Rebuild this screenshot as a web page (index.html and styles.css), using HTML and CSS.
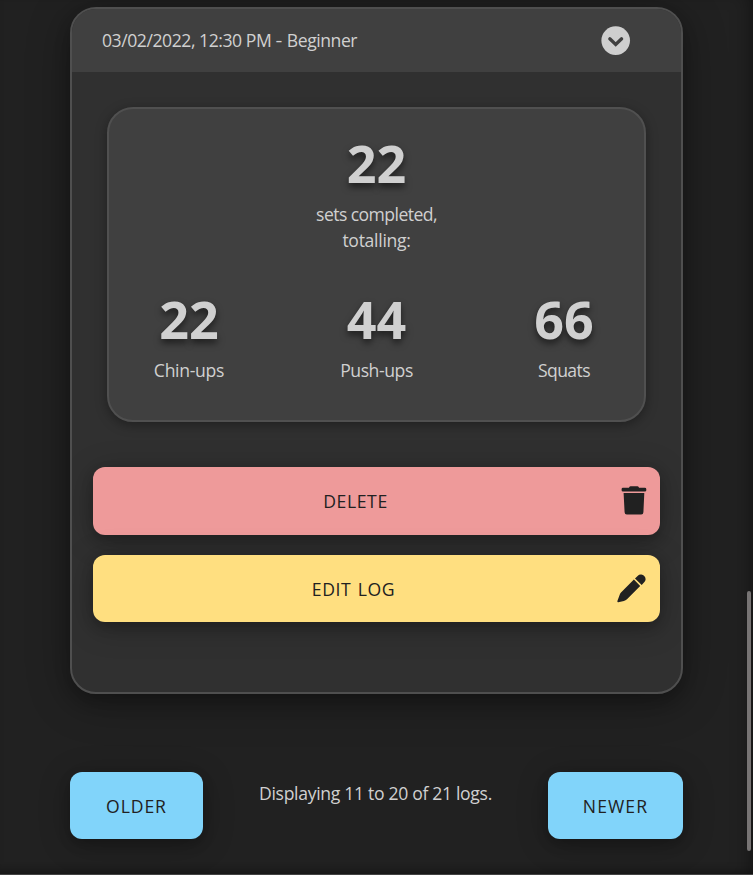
FILE: index.html
```html
<!DOCTYPE html>
<html lang="en">
<head>
<meta charset="utf-8">
<title>Workout logs</title>
<link rel="stylesheet" href="styles.css">
</head>
<body>
<main class="page">
  <section class="log">
    <header class="log-header">
      <span class="log-title">03/02/2022, 12:30 PM <span class="dash">-</span> Beginner</span>
      <svg class="chevron" viewBox="0 0 30 30"><circle cx="14.7" cy="14.6" r="14.3" fill="#cfcfcf"/><path d="M8.8 12.8L14.7 18.5L20.6 12.8" fill="none" stroke="#404040" stroke-width="3.3" stroke-linecap="round" stroke-linejoin="miter"/></svg>
    </header>
    <div class="log-body">
      <div class="stats">
        <div class="stat total"><strong>22</strong><span class="sets">sets completed,</span><span class="totalling">totalling:</span></div>
        <div class="stat-row">
          <div class="stat"><strong>22</strong><span class="chin">Chin-ups</span></div>
          <div class="stat"><strong>44</strong><span class="push">Push-ups</span></div>
          <div class="stat"><strong>66</strong><span class="squat">Squats</span></div>
        </div>
      </div>
      <div class="actions">
        <button class="btn delete"><span>DELETE</span>
          <svg class="icon" viewBox="0 0 30 30"><path d="M11.2 2.2Q11.6 1.3 12.6 1.3H19.4Q20.4 1.3 20.8 2.2L21 2.8H26.8Q28.3 2.8 28.3 4.2V5.2Q28.3 6.6 26.8 6.6H5Q3.6 6.6 3.6 5.2V4.2Q3.6 2.8 5 2.8H11Z M5.6 8H26.3L25.4 27.3Q25.3 29.5 23.2 29.5H8.8Q6.7 29.5 6.6 27.3Z" fill="#212121"/></svg>
        </button>
        <button class="btn edit"><span>EDIT LOG</span>
          <svg class="icon" viewBox="0 0 30 30"><path d="M16.9 6.6L23.2 12.9L10 26.2Q8.6 27.4 6.9 27.9L1.3 29.3Q.1 29.4 .4 28.1L2.7 21.7Q3.1 20.5 4 19.6Z M18 5.5L20.6 2.9Q22.2 1.3 24.3 1.5Q26.1 1.6 27.3 3.1Q28.8 4.7 28.6 6.6Q28.5 8 27.4 9.1L24.7 11.9Z" fill="#212121"/></svg>
        </button>
      </div>
    </div>
  </section>
  <nav class="pager">
    <button class="btn older"><span>OLDER</span></button>
    <span class="status">Displaying 11 to 20 of 21 logs.</span>
    <button class="btn newer"><span>NEWER</span></button>
  </nav>
</main>
<div class="scroll-thumb"></div>
</body>
</html>
```
FILE: styles.css
```css
* { box-sizing: border-box; }
body {
  margin: 0;
  background: #212121;
  color: #d0d0d0;
  font: 17.6px/26px "Open Sans", "Noto Sans", sans-serif;
}
.page {
  height: 875px;
  padding: 7px 70px 0;
  overflow: hidden;
  border-bottom: 1px solid #424242;
  box-shadow: inset -14px 0 20px -12px rgba(0,0,0,.4), inset 0 -8px 8px -6px rgba(0,0,0,.35);
}
.log {
  height: 687px;
  border: 2px solid #4f4f4f;
  border-radius: 26px;
  overflow: hidden;
  background: #303030;
  box-shadow: 0 7px 44px rgba(0,0,0,.32), 0 8px 16px rgba(0,0,0,.2);
}
.log-header {
  height: 63px;
  padding: 0 50px 0 30px;
  display: flex;
  align-items: center;
  justify-content: space-between;
  background: #404040;
}
.log-title { letter-spacing: -.45px; margin-bottom: 2px; }
.dash { display: inline-block; transform: scaleX(1.2); margin: 0 1px; }
.chevron { width: 30px; height: 30px; }
.log-body { padding: 35px 21px 0; }
.stats {
  height: 315px;
  margin: 0 14px;
  padding: 25px 0 0;
  border: 2px solid #505050;
  border-radius: 26px;
  background: #404040;
  box-shadow: 0 3px 12px rgba(0,0,0,.35);
}
.stat { display: flex; flex-direction: column; align-items: center; }
.stat strong {
  font-size: 52px;
  line-height: 58px;
  margin-bottom: 9px;
  text-shadow: 0 4px 7px rgba(0,0,0,.55);
}
.stat-row {
  display: grid;
  grid-template-columns: repeat(3, 187.5px);
  justify-content: center;
  margin-top: 37px;
}
.sets { letter-spacing: -.57px; }
.totalling, .chin { letter-spacing: -.3px; }
.push { letter-spacing: -.43px; }
.squat { letter-spacing: -.6px; }
.actions { margin-top: 45px; display: grid; gap: 20px; }
.btn {
  height: 67px;
  padding: 0;
  border: 0;
  border-radius: 12px;
  color: #212121;
  font: inherit;
  display: flex;
  align-items: center;
  justify-content: center;
  box-shadow: 0 5px 32px rgba(0,0,0,.24), 0 5px 12px rgba(0,0,0,.2);
}
.delete, .edit { padding: 0 13px 0 0; }
.delete span { flex: 1; letter-spacing: .6px; }
.edit span { flex: 1; padding-right: 3px; letter-spacing: .55px; word-spacing: 1.5px; }
.delete { height: 68px; padding-right: 12px; background: #ee9a9a; }
.edit { padding-top: 1px; background: #ffdf80; }
.icon { width: 30px; height: 30px; margin-bottom: 2px; }
.pager {
  display: flex;
  justify-content: space-between;
  margin-top: 78px;
}
.older, .newer { background: #81d4fa; }
.older { width: 133px; letter-spacing: .9px; }
.newer { width: 135px; letter-spacing: 1.1px; }
.status { margin-top: 8px; letter-spacing: -.32px; }
.scroll-thumb {
  position: absolute;
  left: 747px;
  top: 591px;
  width: 4px;
  height: 260px;
  border-radius: 2px;
  background: #777474;
}
```
